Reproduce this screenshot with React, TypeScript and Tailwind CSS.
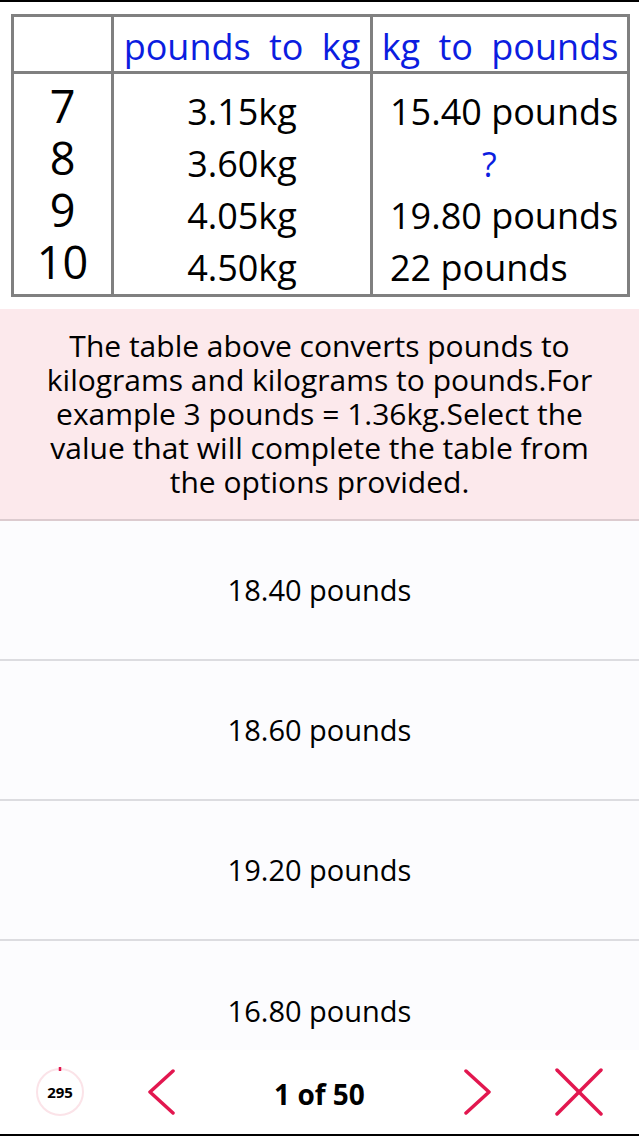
import React from "react";

const ff = { fontFamily: '"Open Sans", "Noto Sans", sans-serif' };

export default function App() {
  const options = ["18.40 pounds", "18.60 pounds", "19.20 pounds", "16.80 pounds"];
  return (
    <div
      className="w-[639px] h-[1136px] flex flex-col bg-[#fcfcfe] border-t-[2px] border-b-[2px] border-black overflow-hidden text-black"
      style={ff}
    >
      <div className="flex-1 flex flex-col overflow-hidden">
        {/* table */}
        <div className="bg-white pt-[12px] pl-[11px] pr-[9px] pb-[12px]">
          <div className="border-[3px] border-[#808080] flex flex-col">
            <div className="flex h-[57px] border-b-[3px] border-[#808080] text-[#0b1de0] text-[36px] leading-none [word-spacing:9px]">
              <div className="w-[97px]" />
              <div className="w-[259px] border-l-[3px] border-[#808080] flex items-center justify-center pt-[5px]">
                pounds to kg
              </div>
              <div className="flex-1 border-l-[3px] border-[#808080] flex items-center justify-center pt-[5px]">
                kg to pounds
              </div>
            </div>
            <div className="flex h-[220px]">
              <div className="w-[97px] flex flex-col items-center pt-[6px] text-[45px] leading-[52px]">
                <div className="h-[52px]">7</div>
                <div className="h-[52px]">8</div>
                <div className="h-[52px]">9</div>
                <div className="h-[52px]">10</div>
              </div>
              <div className="w-[259px] border-l-[3px] border-[#808080] flex flex-col items-center pt-[12px] text-[36px] leading-[52px]">
                <div>3.15kg</div>
                <div>3.60kg</div>
                <div>4.05kg</div>
                <div>4.50kg</div>
              </div>
              <div className="flex-1 border-l-[3px] border-[#808080] flex flex-col pt-[12px] pl-[17px] text-[36px] leading-[52px]">
                <div>15.40 pounds</div>
                <div className="text-[#0b1de0] pl-[92px] text-[34px]">?</div>
                <div>19.80 pounds</div>
                <div>22 pounds</div>
              </div>
            </div>
          </div>
        </div>

        {/* description */}
        <div className="bg-[#fce9ec] border-b-[2px] border-[#dccbcf] pt-[20px] pb-[20px] px-[40px] text-center text-[30px] leading-[34px]">
          The table above converts pounds to kilograms and kilograms to pounds.For example 3 pounds = 1.36kg.Select the value that will complete the table from the options provided.
        </div>

        {/* options */}
        {options.map((o, i) => (
          <div
            key={o}
            className={
              "shrink-0 h-[140px] flex items-center justify-center text-[29px] " +
              (i < options.length - 1 ? "border-b-[2px] border-[#dcdce0]" : "")
            }
          >
            {o}
          </div>
        ))}
      </div>

      {/* bottom bar */}
      <div className="h-[84px] shrink-0 bg-white flex items-center relative">
        <div className="w-[120px] flex justify-center">
          <div className="relative w-[50px] h-[50px] flex items-center justify-center">
            <svg className="absolute inset-0" width="50" height="50" viewBox="0 0 50 50">
              <circle cx="25" cy="25" r="23" fill="none" stroke="#fbe3e8" strokeWidth="2" />
              <line x1="25" y1="0" x2="25" y2="4" stroke="#e2174f" strokeWidth="2.5" />
            </svg>
            <span className="relative text-[15px] font-bold">295</span>
          </div>
        </div>
        <div className="w-[84px] flex justify-center">
          <svg width="30" height="46" viewBox="0 0 30 46">
            <polyline points="26,2 3,23 26,44" fill="none" stroke="#e2174f" strokeWidth="3.5" strokeLinecap="round" strokeLinejoin="round" />
          </svg>
        </div>
        <div className="flex-1 flex justify-center text-[28px] font-bold pt-[4px]">1 of 50</div>
        <div className="w-[84px] flex justify-center">
          <svg width="30" height="46" viewBox="0 0 30 46">
            <polyline points="4,2 27,23 4,44" fill="none" stroke="#e2174f" strokeWidth="3.5" strokeLinecap="round" strokeLinejoin="round" />
          </svg>
        </div>
        <div className="w-[120px] flex justify-center">
          <svg width="50" height="48" viewBox="0 0 50 48">
            <line x1="3" y1="2" x2="47" y2="46" stroke="#e2174f" strokeWidth="3.5" strokeLinecap="round" />
            <line x1="47" y1="2" x2="3" y2="46" stroke="#e2174f" strokeWidth="3.5" strokeLinecap="round" />
          </svg>
        </div>
      </div>
    </div>
  );
}
